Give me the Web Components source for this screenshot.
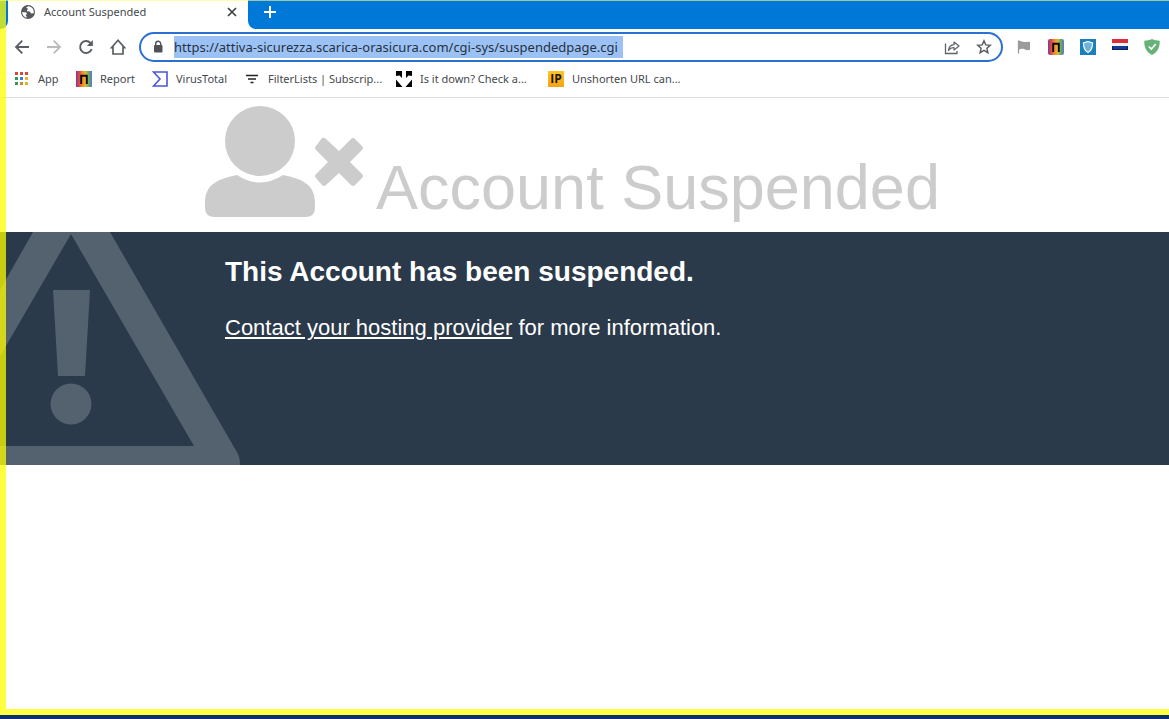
<!DOCTYPE html>
<html lang="en">
<head>
<meta charset="utf-8">
<title>Account Suspended</title>
<style>
html,body{margin:0;height:100%;background:#fff}
body{font-family:"Noto Sans","Open Sans",sans-serif;overflow:hidden}
</style>
</head>
<body>
<browser-window>
  <tab-strip slot="tabs">Account Suspended</tab-strip>
  <nav-toolbar slot="toolbar" url="https://attiva-sicurezza.scarica-orasicura.com/cgi-sys/suspendedpage.cgi"></nav-toolbar>
  <bookmark-bar slot="bookmarks">
    <bookmark-item icon="apps">App</bookmark-item>
    <bookmark-item icon="report">Report</bookmark-item>
    <bookmark-item icon="virus">VirusTotal</bookmark-item>
    <bookmark-item icon="filter">FilterLists | Subscrip...</bookmark-item>
    <bookmark-item icon="down">Is it down? Check a...</bookmark-item>
    <bookmark-item icon="ip">Unshorten URL can...</bookmark-item>
  </bookmark-bar>
  <suspended-page>
    <span slot="title">Account Suspended</span>
    <span slot="reason">This Account has been suspended.</span>
    <span slot="link">Contact your hosting provider</span>
    <span slot="more">for more information.</span>
  </suspended-page>
</browser-window>
<script>
const rainbow = '<svg viewBox="0 0 16 16" width="16" height="16"><defs><linearGradient id="g"><stop offset="0" stop-color="#8a3a86"/><stop offset=".2" stop-color="#d8484e"/><stop offset=".4" stop-color="#f28a2a"/><stop offset=".6" stop-color="#e3b23a"/><stop offset=".78" stop-color="#6fae5c"/><stop offset=".9" stop-color="#4a9aa0"/><stop offset="1" stop-color="#8a62b8"/></linearGradient></defs><rect width="16" height="16" rx="RX" fill="url(#g)"/><path d="M5.200 13V4.700h5.600V13" fill="none" stroke="#0c0808" stroke-width="1.900"/></svg>';
const icons = {
  apps: '<svg viewBox="0 0 16 16" width="16" height="16"><path fill="#d9473b" d="M1 1h3v3H1zM6 1h3v3H6zM11 1h3v3h-3z"/><path fill="#2f9a59" d="M1 6h3v3H1zM1 11h3v3H1z"/><path fill="#3a7de0" d="M6 6h3v3H6z"/><path fill="#e9b32c" d="M11 6h3v3h-3zM11 11h3v3h-3z"/><path fill="#c58b35" d="M6 11h3v3H6z"/></svg>',
  report: rainbow.replace('RX', '0'),
  virus: '<svg viewBox="0 0 16 16" width="16" height="16"><path d="M1.500 1h13.500v14H1.500L8 8z" fill="#fff" stroke="#4a55dc" stroke-width="1.600"/></svg>',
  filter: '<svg viewBox="0 0 16 16" width="16" height="16"><path d="M2 4.500h12M4 8h8M6.500 11.500h3" stroke="#222" stroke-width="1.700" fill="none"/></svg>',
  down: '<svg viewBox="0 0 16 16" width="16" height="16"><path fill="#050505" d="M0 0h6v7L3.500 4.500 0 5zM10 0h6v5l-3.500-.5L10 7zM0 8.500L6.500 16H0zM16 8.500V16H9.500z"/></svg>',
  ip: '<svg viewBox="0 0 16 16" width="16" height="16"><defs><linearGradient id="y" x2="0" y2="1"><stop stop-color="#fdc528"/><stop offset="1" stop-color="#f6a314"/></linearGradient></defs><path fill="url(#y)" d="M0 0h16v16H0z"/><text x="8" y="12" text-anchor="middle" font-family="Open Sans,sans-serif" font-weight="700" font-size="12" fill="#1c1400">IP</text></svg>'
};

function define(name, template) {
  customElements.define(name, class extends HTMLElement {
    constructor() {
      super();
      this.attachShadow({ mode: 'open' });
    }
    connectedCallback() {
      this.shadowRoot.innerHTML = template(this);
    }
  });
}

define('browser-window', () => `
<style>
:host{display:flex;flex-direction:column;height:100vh;position:relative;box-sizing:border-box;border-bottom:4px solid #0b3070;overflow:hidden}
.page{flex:1;min-height:0;overflow:hidden}
.frame{position:absolute;inset:0;box-sizing:border-box;border:solid rgba(255,255,0,.75);border-width:0 0 6px 6px;pointer-events:none}
.edge{position:absolute;inset:0 0 auto 0;height:1px;background:rgba(255,255,120,.6);pointer-events:none}
</style>
<slot name="tabs"></slot><slot name="toolbar"></slot><slot name="bookmarks"></slot>
<div class="page"><slot></slot></div><div class="frame"></div><div class="edge"></div>`);

define('tab-strip', () => `
<style>
:host{display:flex;height:29px;background:#0078d7;color:#45494d;font-size:11px;line-height:16px}
.lead{width:8px;height:100%;border-radius:0 0 8px 0;background:#0078d7}
.under{background:#fff}
.tab{display:flex;align-items:center;width:240px;box-sizing:border-box;padding:0 8px 5px 12px;background:#fff;gap:8px}
.name{flex:1;white-space:nowrap}
button{border:0;background:none;padding:0;display:grid;place-items:center;width:16px;height:16px}
.rest{flex:1;background:#fff}
.blue{height:100%;box-sizing:border-box;background:#0078d7;border-radius:0 0 0 8px;padding:4px 14px}
</style>
<div class="under"><div class="lead"></div></div>
<div class="tab">
<svg viewBox="0 0 16 16" width="16" height="16"><circle cx="8" cy="8" r="7" fill="#55595d"/><path fill="#fff" d="M2.200 8.100c2 .2 4.600.2 4.700 1.500.1 1-1 .9-1 1.900 0 .7.8.8.8 1.600v.7C4 13.200 2 11 2.200 8.100zM8.200 2.300c-1 .5-2 1-1.700 1.700.3.600 1.300.2 1.400 1 .1.900-1.300.9-1 1.700.300.9 2.400.3 3.100 1.100.7.700.4 1.300 1.300 1.600.8.300 1.600-.2 2.500-.1.500-3.900-2.100-6.800-5.600-7z"/></svg>
<span class="name"><slot></slot></span>
<button aria-label="Close tab"><svg viewBox="0 0 16 16" width="16" height="16"><path d="M4 4l8 8m0-8l-8 8" stroke="#3c4043" stroke-width="1.700"/></svg></button>
</div>
<div class="rest"><div class="blue"><button aria-label="New tab"><svg viewBox="0 0 16 16" width="16" height="16"><path d="M8 2v12M2 8h12" stroke="#fff" stroke-width="2"/></svg></button></div></div>`);

define('nav-toolbar', el => `
<style>
:host{display:flex;align-items:center;height:36px;padding:0 9px 0 14px;background:#fff;gap:16px}
button{border:0;background:none;padding:0;width:16px;height:16px;display:grid;place-items:center;flex:none}
.box{flex:1;min-width:0;display:flex;align-items:center;box-sizing:border-box;height:30px;margin:0 -3px;border:2px solid #2a6fd2;border-radius:15px;padding:0 9px;gap:16px}
.box>svg{flex:none}
input{border:0;outline:0;padding:0;margin:0 auto 0 -8px;width:449px;min-width:0;height:22px;background:#9cc2f5;color:#26313f;font:13px/22px "Noto Sans","Open Sans",sans-serif}
</style>
<button aria-label="Back"><svg viewBox="0 0 16 16" width="16" height="16"><path d="M15 8H2M8.300 1.700L2 8l6.300 6.300" fill="none" stroke="#5a5e62" stroke-width="1.800"/></svg></button>
<button aria-label="Forward"><svg viewBox="0 0 16 16" width="16" height="16"><path d="M1 8h13M7.700 1.700L14 8l-6.300 6.300" fill="none" stroke="#b9bbbd" stroke-width="1.800"/></svg></button>
<button aria-label="Reload"><svg viewBox="0 0 16 16" width="16" height="16"><path d="M13.700 10.200A6 6 0 1 1 12.400 3.800L14 5.500" fill="none" stroke="#5a5e62" stroke-width="1.900"/><path d="M14.800 1v6H8.800z" fill="#5a5e62"/></svg></button>
<button aria-label="Home"><svg viewBox="0 0 16 16" width="16" height="16"><path d="M1.500 8.700L8 1.300l6.500 7.400H13V15H3V8.700z" fill="none" stroke="#5a5e62" stroke-width="1.700"/></svg></button>
<div class="box">
<svg viewBox="0 0 16 16" width="16" height="16"><rect x="4" y="6" width="8.500" height="7.500" rx="1" fill="#4f5357"/><path d="M5.700 6.500V4.700a2.500 2.500 0 0 1 5 0v1.800" fill="none" stroke="#4f5357" stroke-width="1.400"/></svg>
<input aria-label="Address" value="${el.getAttribute('url')}">
<button aria-label="Share"><svg viewBox="0 0 16 16" width="16" height="16"><path d="M1.500 4.500v10h11.500v-2.500" fill="none" stroke="#5f6368" stroke-width="1.300"/><path d="M4.500 11.500c.4-3.700 2-5.600 5.500-5.900V3l5 4-5 4V8.500c-2.500 0-4 .8-5.500 3z" fill="none" stroke="#5f6368" stroke-width="1.200" stroke-linejoin="round"/></svg></button>
<button aria-label="Bookmark this page"><svg viewBox="0 0 16 16" width="16" height="16"><path d="M8 1.800l1.800 4.100 4.500.4-3.400 3 1 4.400L8 11.400l-3.900 2.300 1-4.400-3.400-3 4.500-.4z" fill="none" stroke="#5a5e62" stroke-width="1.500"/></svg></button>
</div>
<button aria-label="Flag"><svg viewBox="0 0 16 16" width="16" height="16"><path d="M2.500 1.500v13" stroke="#999" stroke-width="1.300"/><path d="M2 2c3-1 4 1.500 7 1l5-.3v8c-3 1-4 .2-6-.6s-3-.2-6 .8z" fill="#9b9b9b"/></svg></button>
<button aria-label="Report">${rainbow.replace('RX', '2')}</button>
<button aria-label="Shield"><svg viewBox="0 0 16 16" width="16" height="16"><path d="M0 0h16v16H0z" fill="#1b7fbd"/><path d="M8 2.500l4.500 1.500c.2 4.500-1 7.500-4.500 9.500-3.500-2-4.700-5-4.500-9.500z" fill="#6db3e0" stroke="#fff" stroke-width="1.200"/></svg></button>
<button aria-label="Netherlands"><svg viewBox="0 0 16 16" width="16" height="16"><path d="M0 0h16v4H0z" fill="#dc2f35"/><path d="M0 4h16v4H0z" fill="#f4f4f8"/><path d="M0 7h16v4H0z" fill="#173a94"/><path d="M0 10.500h16M.5 7v4M15.500 7v4" stroke="#0a1d60"/></svg></button>
<button aria-label="Protection"><svg viewBox="0 0 16 16" width="16" height="16"><path d="M8 0c2.500 1 5 1.500 7.700 1.700C16 8 13.800 13 8 16 2.200 13 0 8 .3 1.700 3 1.500 5.500 1 8 0z" fill="#67b279"/><path d="M4.800 7.500l2.500 2.600L11.800 5" fill="none" stroke="#fff" stroke-width="1.700"/></svg></button>`);

define('bookmark-bar', () => `
<style>:host{display:grid;grid-template-columns:46px 60px 76px 136px 136px auto;justify-content:start;align-items:center;gap:16px;height:32px;padding:0 12px 0 14px;background:#fff;border-bottom:1px solid #dadce0}</style>
<slot></slot>`);

define('bookmark-item', el => `
<style>
:host{display:block}
a{display:flex;align-items:center;gap:8px;height:20px;padding-bottom:4px;color:#45494d;text-decoration:none;font-size:11px;line-height:16px;white-space:nowrap}
svg{flex:none}
</style>
<a href="#">${icons[el.getAttribute('icon')]}<span><slot></slot></span></a>`);

define('suspended-page', () => `
<style>
:host{display:block;font-family:"Liberation Sans",Arial,sans-serif}
header{display:flex;align-items:flex-end;gap:12px;height:134px;box-sizing:border-box;padding:0 204px 14px;color:#ccc}
header svg{flex:none}
h1{margin:0;font-weight:400;font-size:63px;line-height:62px;white-space:nowrap}
section{display:flex;background:#2a3a4a;color:#fff;height:233px}
.warn{width:225px;flex:none}
.warn svg{display:block}
h2{margin:24px 0 0;font-size:28px;line-height:32px}
p{margin:26px 0 0;font-size:22px;line-height:28px}
a{color:inherit;text-underline-offset:2px}
</style>
<header>
<svg viewBox="0 0 160 112" width="160" height="112"><g fill="#ccc"><circle cx="56" cy="35" r="35"/><path d="M33 69q23 15 46 0C98 73 111 78 111 97v5q0 9-10 9H11Q1 111 1 102V97C1 78 14 73 33 69z"/><path d="M118 32q2-1 4 1l13 12 12-12q2-2 4 0l7 7q2 2 0 4L146 56l12 12q2 2 0 4l-7 7q-2 2-4 0L135 67l-13 12q-2 2-4 0l-6-7q-2-2 0-4l12-12-12-12q-2-2 0-4z"/></g></svg>
<h1><slot name="title"></slot></h1>
</header>
<section>
<div class="warn"><svg viewBox="0 0 240 233" width="240" height="233"><g fill="#fff" fill-opacity=".2"><path fill-rule="evenodd" d="M-95 225L33 0H110L238 222Q240 226 240 233H-100zM71 2L-52 214H194z"/><path d="M53 58h37l-5 86H58z"/><circle cx="71" cy="172" r="20.500"/></g></svg></div>
<div><h2><slot name="reason"></slot></h2><p><a href="#"><slot name="link"></slot></a> <slot name="more"></slot></p></div>
</section>`);
</script>
</body>
</html>
